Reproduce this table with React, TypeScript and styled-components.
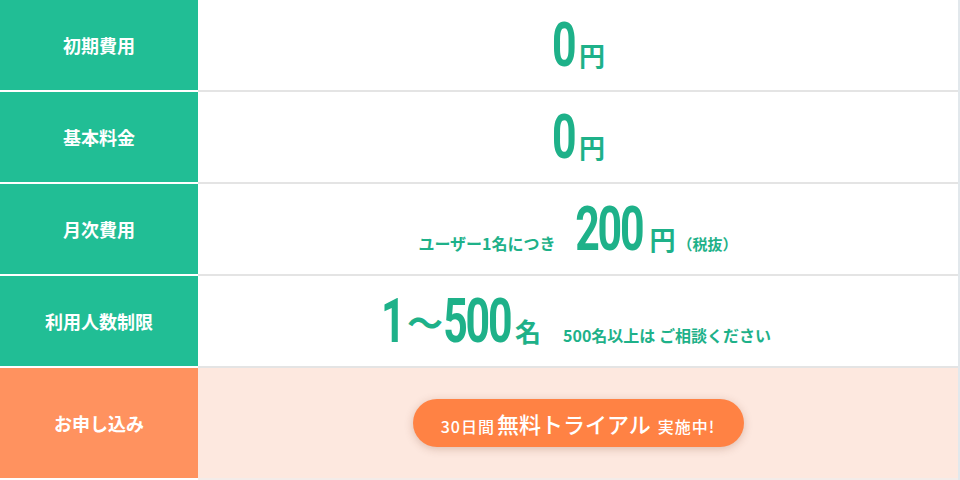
import React from 'react';
import styled, { createGlobalStyle } from 'styled-components';

const GlobalStyle = createGlobalStyle`
  html, body { margin: 0; padding: 0; background: #ffffff; }
  body { font-family: "Noto Sans CJK JP", "Noto Sans", sans-serif; }
`;

const Table = styled.div`
  width: 960px;
  box-sizing: border-box;
  border-right: 2px solid #e2e8ec;
  display: flex;
  flex-direction: column;
`;

const Row = styled.div<{ $h: number }>`
  display: grid;
  grid-template-columns: 198px 1fr;
  height: ${(p) => p.$h}px;
`;

const Label = styled.div<{ $tone: 'green' | 'orange' }>`
  box-sizing: border-box;
  background: ${(p) => (p.$tone === 'green' ? '#21be95' : '#ff925f')};
  border-bottom: 2px solid #ffffff;
  color: #ffffff;
  font-size: 18px;
  font-weight: 700;
  display: flex;
  align-items: center;
  justify-content: center;
`;

const Value = styled.div<{ $tone: 'white' | 'peach' }>`
  box-sizing: border-box;
  background: ${(p) => (p.$tone === 'white' ? '#ffffff' : '#fde8df')};
  border-bottom: 2px solid ${(p) => (p.$tone === 'white' ? '#e4e4e4' : '#f3ece9')};
  display: flex;
  align-items: center;
  justify-content: center;
`;

const Line = styled.div`
  display: flex;
  align-items: baseline;
  color: #1eb189;
`;

const Digits = styled.span<{ $w: number; $ml?: number }>`
  display: inline-flex;
  justify-content: center;
  width: ${(p) => p.$w}px;
  margin-left: ${(p) => p.$ml ?? 0}px;
  font-family: Roboto, "Liberation Sans", sans-serif;
  font-weight: 700;
  font-size: 62px;
  line-height: 1;
  letter-spacing: -3px;
`;

const Squeeze = styled.span`
  display: inline-block;
  white-space: nowrap;
  transform: scaleX(0.69);
  transform-origin: center;
`;

const Tilde = styled.span<{ $ml: number }>`
  align-self: center;
  width: 36px;
  margin-left: ${(p) => p.$ml}px;
  font-size: 36px;
  font-weight: 700;
  line-height: 1;
  text-align: center;
`;

const Unit = styled.span<{ $ml: number }>`
  margin-left: ${(p) => p.$ml}px;
  font-size: 26px;
  font-weight: 700;
  line-height: 1;
`;

const Note = styled.span<{ $ml?: number; $mr?: number }>`
  margin-left: ${(p) => p.$ml ?? 0}px;
  margin-right: ${(p) => p.$mr ?? 0}px;
  font-size: 16px;
  font-weight: 700;
  line-height: 1;
  white-space: pre;
`;

const Paren = styled.span`
  margin-left: 2px;
  font-size: 15px;
  font-weight: 700;
  line-height: 1;
`;

const TrialButton = styled.button`
  width: 331px;
  height: 48px;
  padding: 0;
  border: none;
  border-radius: 24px;
  background: #ff8244;
  box-shadow: 0 2px 8px rgba(120, 60, 30, 0.25);
  color: #ffffff;
  font-family: "Noto Sans CJK JP", sans-serif;
  display: flex;
  align-items: center;
  justify-content: center;
  cursor: pointer;
`;

const ButtonLine = styled.span`
  display: flex;
  align-items: baseline;
`;

const ButtonSmall = styled.span<{ $ml?: number }>`
  margin-left: ${(p) => p.$ml ?? 0}px;
  font-size: 16px;
  font-weight: 500;
  letter-spacing: 1px;
  line-height: 1;
`;

const ButtonBig = styled.span`
  margin-left: 2px;
  font-size: 22px;
  font-weight: 500;
  line-height: 1;
`;

const Num = ({ w, ml, children }: { w: number; ml?: number; children: React.ReactNode }) => (
  <Digits $w={w} $ml={ml}>
    <Squeeze>{children}</Squeeze>
  </Digits>
);

export default function App() {
  return (
    <>
      <GlobalStyle />
      <Table>
        <Row $h={92}>
          <Label $tone="green">初期費用</Label>
          <Value $tone="white">
            <Line>
              <Num w={24}>0</Num>
              <Unit $ml={4}>円</Unit>
            </Line>
          </Value>
        </Row>
        <Row $h={92}>
          <Label $tone="green">基本料金</Label>
          <Value $tone="white">
            <Line>
              <Num w={24}>0</Num>
              <Unit $ml={4}>円</Unit>
            </Line>
          </Value>
        </Row>
        <Row $h={92}>
          <Label $tone="green">月次費用</Label>
          <Value $tone="white">
            <Line>
              <Note $mr={21}>ユーザー1名につき</Note>
              <Num w={65}>200</Num>
              <Unit $ml={8}>円</Unit>
              <Paren>（税抜）</Paren>
            </Line>
          </Value>
        </Row>
        <Row $h={92}>
          <Label $tone="green">利用人数制限</Label>
          <Value $tone="white">
            <Line>
              <Num w={14}>1</Num>
              <Tilde $ml={8}>～</Tilde>
              <Num w={64} ml={2}>500</Num>
              <Unit $ml={6}>名</Unit>
              <Note $ml={22}>500名以上は ご相談ください</Note>
            </Line>
          </Value>
        </Row>
        <Row $h={112}>
          <Label $tone="orange">お申し込み</Label>
          <Value $tone="peach">
            <TrialButton type="button">
              <ButtonLine>
                <ButtonSmall>30日間</ButtonSmall>
                <ButtonBig>無料トライアル</ButtonBig>
                <ButtonSmall $ml={7}>実施中!</ButtonSmall>
              </ButtonLine>
            </TrialButton>
          </Value>
        </Row>
      </Table>
    </>
  );
}
